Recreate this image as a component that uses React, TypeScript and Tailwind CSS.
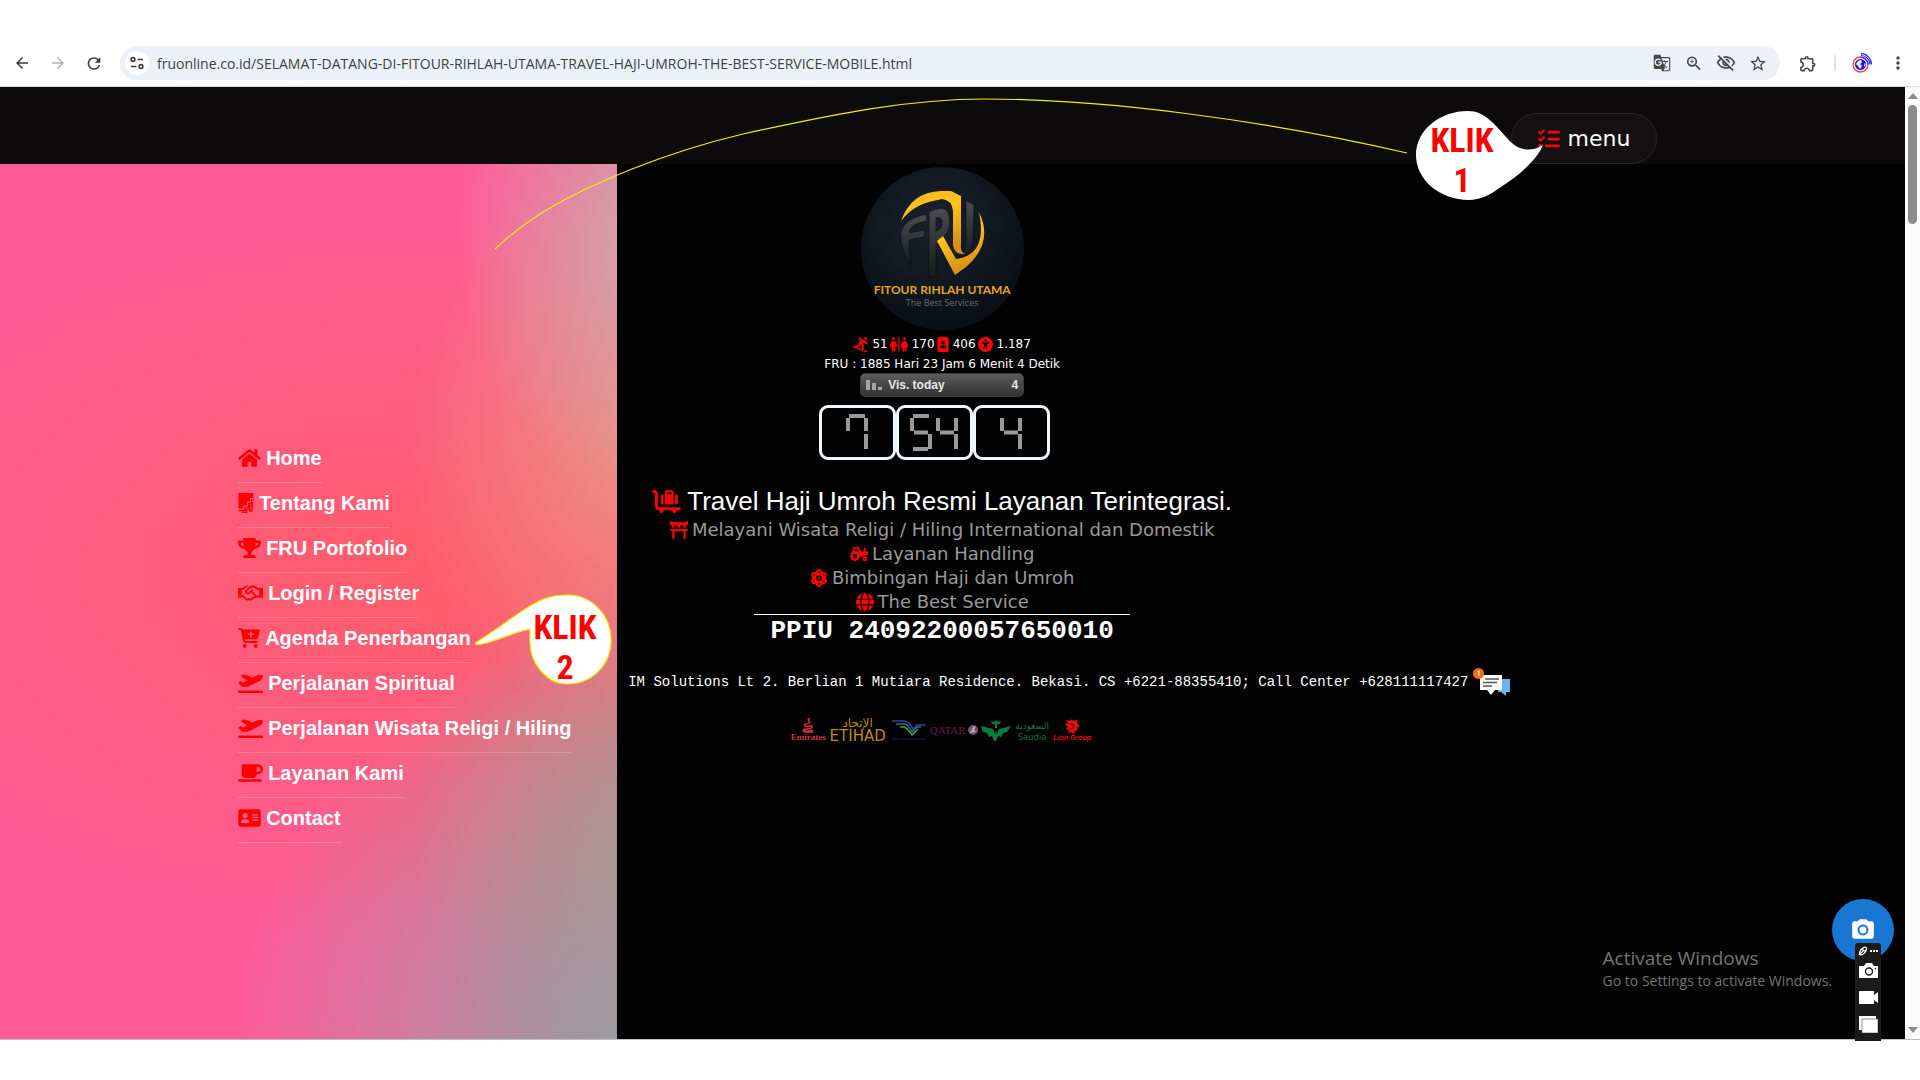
import React from "react";
import type { IconType } from "react-icons";
import { FaHome, FaTrophy, FaCoffee } from "react-icons/fa";
import {
  FaPersonSnowboarding,
  FaRestroom,
  FaImagePortrait,
  FaUniversalAccess,
  FaRegHandshake,
  FaCartPlus,
  FaPlaneDeparture,
  FaAddressCard,
  FaListCheck,
  FaCartFlatbedSuitcase,
  FaToriiGate,
  FaTractor,
  FaAtom,
  FaGlobe,
} from "react-icons/fa6";
import {
  MdArrowBack,
  MdArrowForward,
  MdRefresh,
  MdGTranslate,
  MdZoomIn,
  MdOutlineVisibilityOff,
  MdStarBorder,
  MdOutlineExtension,
  MdMoreVert,
  MdCameraAlt,
} from "react-icons/md";

function StepsIcon({ className }: { className?: string }) {
  return (
    <svg viewBox="0 0 15 20" className={className} fill="currentColor" aria-hidden="true">
      <path d="M0 0h15v5h-3.500v3.500h-3v4h-3.500v3H0z" />
      <path
        d="M15 7h-2v3.500h-3v4H6.500v3H0M15 9.800h-.7v2.700h-3v4H8v3H3M15 14.500h-1.700v3.500h-2.500"
        fill="none"
        stroke="currentColor"
        strokeWidth="1.300"
      />
    </svg>
  );
}

const MENU: { label: string; icon: IconType | typeof StepsIcon; size: string }[] = [
  { label: "Home", icon: FaHome, size: "h-5 w-[23px]" },
  { label: "Tentang Kami", icon: StepsIcon, size: "h-5 w-4" },
  { label: "FRU Portofolio", icon: FaTrophy, size: "h-5 w-[23px]" },
  { label: "Login / Register", icon: FaRegHandshake, size: "h-5 w-[25px]" },
  { label: "Agenda Penerbangan", icon: FaCartPlus, size: "h-5 w-[22px]" },
  { label: "Perjalanan Spiritual", icon: FaPlaneDeparture, size: "h-5 w-[25px]" },
  { label: "Perjalanan Wisata Religi / Hiling", icon: FaPlaneDeparture, size: "h-5 w-[25px]" },
  { label: "Layanan Kami", icon: FaCoffee, size: "h-5 w-[25px]" },
  { label: "Contact", icon: FaAddressCard, size: "h-5 w-[23px]" },
];

const STATS: { value: string; icon: IconType; size: string }[] = [
  { value: "51", icon: FaPersonSnowboarding, size: "h-[15px] w-[15px]" },
  { value: "170", icon: FaRestroom, size: "h-[15px] w-[18px]" },
  { value: "406", icon: FaImagePortrait, size: "h-[15px] w-[12px]" },
  { value: "1.187", icon: FaUniversalAccess, size: "h-[15px] w-[15px]" },
];

const SERVICES: { label: string; icon: IconType }[] = [
  { label: "Melayani Wisata Religi / Hiling International dan Domestik", icon: FaToriiGate },
  { label: "Layanan Handling", icon: FaTractor },
  { label: "Bimbingan Haji dan Umroh", icon: FaAtom },
  { label: "The Best Service", icon: FaGlobe },
];

/* Segment order: top, top-left, top-right, middle, bottom-left, bottom-right, bottom */
const SEGMENTS = [
  [3, 2, 19, 2],
  [2, 4, 2, 17],
  [20, 4, 20, 17],
  [4, 18.5, 18, 18.5],
  [2, 20, 2, 33],
  [20, 20, 20, 35],
  [3, 35, 18, 35],
];
const LIT: Record<string, number[]> = {
  "4": [1, 2, 3, 5],
  "5": [0, 1, 3, 5, 6],
  "7": [0, 1, 2, 5],
};

function Counter({ value }: { value: string }) {
  return (
    <div
      role="img"
      aria-label={value}
      className="flex h-[55px] w-[77px] items-center justify-center gap-1 rounded-[9px] border-[3px] border-[#f0f8ff]"
    >
      {value.split("").map((digit, i) => (
        <svg key={i} viewBox="0 0 22 37" className="h-[37px] w-[22px]" aria-hidden="true">
          {LIT[digit].map((s) => (
            <line
              key={s}
              x1={SEGMENTS[s][0]}
              y1={SEGMENTS[s][1]}
              x2={SEGMENTS[s][2]}
              y2={SEGMENTS[s][3]}
              stroke="#999"
              strokeWidth="4"
            />
          ))}
        </svg>
      ))}
    </div>
  );
}

function BrowserBar() {
  return (
    <header className="flex h-[87px] shrink-0 items-end border-b border-[#d9dcdc] bg-white pb-[6px] text-[#474747]">
      <div className="flex h-[34px] w-full items-center">
        <nav className="flex items-center gap-4 pl-3" aria-label="Browser">
          <button aria-label="Back" className="text-[#3c3c3c]"><MdArrowBack className="h-[18px] w-5" /></button>
          <button aria-label="Forward" className="text-[#b4b4b4]"><MdArrowForward className="h-[18px] w-5" /></button>
          <button aria-label="Reload" className="text-[#3c3c3c]"><MdRefresh className="h-[19px] w-5" /></button>
        </nav>
        <div className="ml-4 flex h-[34px] flex-1 items-center rounded-full bg-[#ebf0f9] pr-3">
          <button aria-label="Site information" className="ml-[5px] flex h-6 w-6 shrink-0 items-center justify-center rounded-full bg-white">
            <svg viewBox="0 0 14 14" className="h-[14px] w-[14px]" fill="none" stroke="#3c3c3c" strokeWidth="1.600">
              <circle cx="3" cy="3.500" r="1.900" />
              <path d="M7.500 3.500H13M1 10.500h5.500" />
              <circle cx="11" cy="10.500" r="1.900" />
            </svg>
          </button>
          <input
            aria-label="Address"
            readOnly
            value="fruonline.co.id/SELAMAT-DATANG-DI-FITOUR-RIHLAH-UTAMA-TRAVEL-HAJI-UMROH-THE-BEST-SERVICE-MOBILE.html"
            className="ml-2 min-w-0 flex-1 bg-transparent font-['Open_Sans',sans-serif] text-[14px] text-[#3f4145] outline-none"
          />
          <div className="flex items-center gap-3">
            <button aria-label="Translate"><MdGTranslate className="h-[18px] w-5" /></button>
            <button aria-label="Zoom"><MdZoomIn className="h-[19px] w-5" /></button>
            <button aria-label="Third-party cookies blocked"><MdOutlineVisibilityOff className="h-5 w-5" /></button>
            <button aria-label="Bookmark"><MdStarBorder className="h-[19px] w-5" /></button>
          </div>
        </div>
        <div className="flex items-center pr-3 pl-[18px]">
          <button aria-label="Extensions"><MdOutlineExtension className="h-[19px] w-5" /></button>
          <span className="mx-4 h-4 w-[2px] bg-[#d3e3fd]" />
          <button aria-label="Profile">
            <svg viewBox="0 0 20 20" className="h-5 w-5" fill="none">
              <circle cx="8.500" cy="11.500" r="7.500" stroke="#ee3b4b" strokeWidth="1.300" />
              <circle cx="8.500" cy="11.500" r="5.500" fill="#1a1aee" />
              <path d="M6 8l3-1 1 2-2 2 2 2-2 3-2-3-2-2zM12 10l1.500 2-1 2z" fill="#fff" />
              <path d="M9 4.500a7 7 0 0 1 7 7M9 2.500a9 9 0 0 1 9 9M9 .7a10.500 10.500 0 0 1 10.500 10.800" stroke="#2a2aff" strokeWidth="1.200" />
            </svg>
          </button>
          <button aria-label="More" className="ml-4"><MdMoreVert className="h-5 w-5" /></button>
        </div>
      </div>
    </header>
  );
}

function Logo() {
  return (
    <div className="flex h-[163px] w-[163px] flex-col items-center rounded-full bg-[radial-gradient(circle_at_45%_35%,#1a212c_0%,#10161e_50%,#05080d_100%)] pt-[20px]">
      <svg viewBox="0 0 92 92" className="h-[92px] w-[92px]" aria-hidden="true">
        <defs>
          <linearGradient id="gold" x1="0" y1="0" x2="0.300" y2="1">
            <stop offset="0" stopColor="#f5b31b" />
            <stop offset="0.400" stopColor="#ffc61c" />
            <stop offset="1" stopColor="#d98f12" />
          </linearGradient>
          <linearGradient id="steel" x1="0" y1="0" x2="0" y2="1">
            <stop offset="0" stopColor="#484b4f" />
            <stop offset="1" stopColor="#16191d" />
          </linearGradient>
        </defs>
        <g fill="url(#steel)" stroke="#07090c" strokeWidth="0.500">
          <path d="M30 27 L31 34 Q13 37 13 46 L29 43 L28 50 L13 53 Q12 65 16 79 Q3 62 5 45 Q8 32 30 27Z" />
          <path d="M33 25 Q50 16 53 28 Q56 43 47 50 L43 54 L40 59 L40 89 L33 91 Z M40 31 L40 44 Q47 42 46 34 Q45 29 40 31Z" fillRule="evenodd" />
          <path d="M70 13 L78 18 L77 54 Q76 65 68 70 L62 71 Q70 65 70 54Z" />
        </g>
        <path
          d="M5 34 Q15 5 45 4 L55 4 L65 9 L65 57 Q64 65 69 67 Q58 68 57 58 L57 24 Q56 13 46 12 L37 14 Q17 18 5 34Z"
          fill="url(#gold)"
        />
        <path d="M83 25 Q98 56 70 80 L59 88 L41 54 L47 49 L60 72 Q92 68 83 25Z" fill="url(#gold)" />
      </svg>
      <p className="mt-[3px] font-['Lato','Open_Sans',sans-serif] text-[12px] leading-[15px] font-bold whitespace-nowrap text-[#e5a41f]">
        FITOUR RIHLAH UTAMA
      </p>
      <p className="font-['Open_Sans',sans-serif] text-[9px] leading-[12px] text-[#66696d]">The Best Services</p>
    </div>
  );
}

function Airlines() {
  return (
    <div className="mt-[19px] flex h-[26px] items-end justify-center gap-[3px] leading-none whitespace-nowrap">
      <div className="flex w-8 flex-col items-center text-[#d2343a]">
        <svg viewBox="0 0 14 15" className="h-[15px] w-[14px]" fill="none" stroke="currentColor" strokeWidth="1.500" aria-hidden="true">
          <path d="M9 0C4 3 11 3 8 5S2 6 4 8s8-2 7 1-8 1-8 3 6 1 9 0M4 11c-3 1-2 3 1 3h7" />
        </svg>
        <span className="font-['Liberation_Serif',serif] text-[9px] leading-[9px] font-bold">Emirates</span>
      </div>
      <div className="flex w-[61px] flex-col items-center text-[#bd8b13]">
        <span className="font-['DejaVu_Sans',sans-serif] text-[12px] leading-[13px]">الإتحاد</span>
        <span className="font-['DejaVu_Sans',sans-serif] text-[15px] leading-[12px]">ETIHAD</span>
      </div>
      <div className="flex w-9 flex-col items-center text-[#20306e]">
        <svg viewBox="0 0 36 17" className="h-[17px] w-9" fill="none" strokeWidth="1.500" aria-hidden="true">
          <path d="M1 2h11q5 0 8 5l2 3 4-4h9" stroke="#34439a" />
          <path d="M5 5h8q4 0 6 5l2 3 5-5h4" stroke="#2d6b8f" />
          <path d="M9 8h4q3 1 5 4l3 4 6-6" stroke="#4f9b45" />
        </svg>
        <span className="text-[4px] leading-[6px]">Garuda Indonesia</span>
      </div>
      <div className="flex w-[48px] items-center justify-center gap-[1px] pb-[6px] text-[#6b1848]">
        <span className="font-['Liberation_Serif',serif] text-[11px] leading-[12px]">QATAR</span>
        <svg viewBox="0 0 12 12" className="h-3 w-3 shrink-0" aria-hidden="true">
          <circle cx="6" cy="6" r="5" fill="#74506a" />
          <path d="M3 9L6 3l3-1-2 4 2 2z" fill="#b9a5b3" />
        </svg>
      </div>
      <div className="flex w-[68px] items-center justify-center gap-1 text-[#0c7a43]">
        <svg viewBox="0 0 30 22" className="h-[22px] w-[30px] shrink-0" fill="currentColor" aria-hidden="true">
          <path d="M15 0l2 2 3-1-1 3h-8l-1-3 3 1zM14 4h2v4h-2zM0 6l12 3 2 5 1-4 1 4 2-5 12-3-4 6-4 1-2 4-3-1-2 5h-2l-2-5-3 1-2-4-4-1z" />
        </svg>
        <div className="flex flex-col items-center">
          <span className="font-['DejaVu_Sans',sans-serif] text-[9px] leading-[12px]">السعودية</span>
          <span className="font-['Open_Sans',sans-serif] text-[9px] leading-[10px]">Saudia</span>
        </div>
      </div>
      <div className="flex w-10 flex-col items-center text-[#ee0808]">
        <svg viewBox="0 0 16 15" className="h-[15px] w-4" fill="currentColor" aria-hidden="true">
          <path d="M2 1l4 1 2-2 1 2 4-1v3l3 3-3 1 1 3-3 1-1 3-3-2-3 1 1-3-3-1 2-2-3-3 3-1z" />
          <path d="M6 5l4 1-1 3-3 1" stroke="#020202" fill="none" />
        </svg>
        <span className="font-['Liberation_Sans',sans-serif] text-[7px] leading-[8px] font-bold italic">Lion Group</span>
      </div>
    </div>
  );
}

function SideMenu() {
  return (
    <aside className="w-[32.4%] shrink-0 bg-[radial-gradient(ellipse_64%_48%_at_102%_102%,#989ea0_0%,#989ea0b0_35%,#989ea000_100%),radial-gradient(ellipse_32%_30%_at_106%_8%,#ccaaac_0%,#ccaaac00_100%),radial-gradient(ellipse_40%_32%_at_105%_32%,#ea9282_0%,#ea928200_100%),radial-gradient(ellipse_38%_32%_at_105%_76%,#b89484_0%,#b8948400_100%),radial-gradient(ellipse_105%_42%_at_70%_47%,#ff5c6a_0%,#ff5c6a00_100%)] bg-[#ff5c98] pt-[274px] pl-[12.5%]">
      <ul className="font-['Liberation_Sans',Arial,sans-serif] text-[20px] leading-6 font-bold text-white">
        {MENU.map(({ label, icon: Icon, size }) => (
          <li key={label} className="flex h-[45px]">
            <a href="#" className="flex items-center gap-[5px] border-b border-white/20 pb-1 whitespace-nowrap">
              <Icon className={`${size} shrink-0 text-[#ff0000]`} />
              {label}
            </a>
          </li>
        ))}
      </ul>
    </aside>
  );
}

function Hero() {
  return (
    <main className="min-w-0 flex-1 bg-[#020202] pl-1">
      <div className="flex w-1/2 flex-col items-center pt-[3px] font-['DejaVu_Sans',Verdana,sans-serif] whitespace-nowrap text-white">
        <Logo />
        <div className="mt-1 flex h-5 items-center gap-[2px] text-[12px]">
          {STATS.map(({ value, icon: Icon, size }) => (
            <span key={value} className="flex items-center gap-1">
              <Icon className={`${size} text-[#ff0000]`} />
              {value}
            </span>
          ))}
        </div>
        <p className="pt-px text-[12px] leading-[18px]">FRU : 1885 Hari 23 Jam 6 Menit 4 Detik</p>
        <div className="flex h-6 w-[164px] items-center rounded-[5px] border border-[#3c3c3c] bg-linear-to-b from-[#5c5c5c] to-[#333] px-[5px] font-['Liberation_Sans',sans-serif] text-[12px] font-bold text-[#e8e8e8]">
          <svg viewBox="0 0 16 10" className="h-[10px] w-4" fill="#a5a5a5" aria-hidden="true">
            <path d="M0 0h4v10H0zM6 3h4v7H6zM12 7h4v3h-4z" />
          </svg>
          <span className="ml-[6px]">Vis. today</span>
          <span className="ml-auto">4</span>
        </div>
        <div className="mt-2 mr-4 flex">
          <Counter value="7" />
          <Counter value="54" />
          <Counter value="4" />
        </div>
        <h1 className="mt-[25px] flex h-8 items-center gap-[6px] font-['Liberation_Sans',Arial,sans-serif] text-[26px]">
          <FaCartFlatbedSuitcase className="h-[23px] w-[29px] text-[#ff0000]" />
          Travel Haji Umroh Resmi Layanan Terintegrasi.
        </h1>
        <ul className="mt-px flex flex-col items-center text-[18px] leading-6 text-[#999]">
          {SERVICES.map(({ label, icon: Icon }) => (
            <li key={label} className="flex items-center gap-1">
              <Icon className="h-[18px] text-[#ff0000]" />
              {label}
            </li>
          ))}
        </ul>
        <p className="w-[376px] border-t border-white pt-[2px] text-center font-['Liberation_Mono','Courier_New',monospace] text-[26px] leading-7 font-bold">
          PPIU 24092200057650010
        </p>
      </div>
      <div className="mt-[22px] flex h-[30px] items-center gap-[5px] pl-[7px] font-['Liberation_Mono','Courier_New',monospace] text-[14px] whitespace-nowrap text-white">
        <span>IM Solutions Lt 2. Berlian 1 Mutiara Residence. Bekasi. CS +6221-88355410; Call Center +628111117427</span>
        <a href="#" aria-label="Chat" className="shrink-0">
          <svg viewBox="0 0 38 28" className="h-7 w-[38px]" aria-hidden="true">
            <path d="M29 11h8v13h-4v4l-5-4h-3v-2h4z" fill="#6cb4ee" />
            <path d="M7 7h22v15h-7l-4 5-4-5H7z" fill="#fff" />
            <path d="M12 11h14M10 14.500h14M10 18h9" stroke="#555" strokeWidth="1.300" />
            <circle cx="5.500" cy="5.500" r="5.500" fill="#ff6a0a" />
            <path d="M4.500 4L6 3v5" stroke="#fff" strokeWidth="1.200" fill="none" />
          </svg>
        </a>
      </div>
      <div className="w-1/2">
        <Airlines />
      </div>
    </main>
  );
}

function Scrollbar() {
  return (
    <div className="flex w-[15px] shrink-0 flex-col items-center bg-[#fbfbfb] py-[6px]" aria-hidden="true">
      <svg viewBox="0 0 10 6" className="h-[6px] w-[10px]" fill="#8b8b8b"><path d="M0 6l5-6 5 6z" /></svg>
      <span className="mt-[6px] h-[119px] w-[9px] rounded-full bg-[#8b8b8b]" />
      <svg viewBox="0 0 10 6" className="mt-auto h-[6px] w-[10px]" fill="#8b8b8b"><path d="M0 0l5 6 5-6z" /></svg>
    </div>
  );
}

function Annotations() {
  return (
    <div className="pointer-events-none absolute top-0 left-0 font-['Roboto_Condensed','Open_Sans_Condensed',sans-serif] text-[34px] leading-[40px] font-bold text-[#ff0000]">
      <svg viewBox="0 0 1920 1080" className="h-[1080px] w-[1920px] max-w-none" aria-hidden="true">
        <path
          d="M495 249C532 214 575 192 632 169C670 154 705 143 743 134C839 113 910 99 985 99C1100 99 1260 119 1407 153"
          fill="none"
          stroke="#f5f000"
          strokeWidth="1.200"
        />
        <path
          d="M1416 155C1416 130 1440 111 1468 111C1485 111 1494 124 1508 139C1517 150 1530 153 1543 145C1536 162 1515 178 1501 187C1490 195 1480 200 1469 200C1440 200 1416 180 1416 155Z"
          fill="#fff"
        />
        <path
          d="M475 643C495 631 515 615 530 606C545 597 555 595 567 595C592 595 611 615 611 640C611 665 592 684 567 684C548 684 530 665 530 641L530 630C527 627 500 640 482 644C477 645 475 645 475 643Z"
          fill="#fff"
          stroke="#f5f000"
          strokeWidth="1.200"
        />
      </svg>
      <p className="absolute top-[120px] left-[1422px] w-20 text-center whitespace-nowrap">KLIK<br />1</p>
      <p className="absolute top-[607px] left-[525px] w-20 text-center whitespace-nowrap">KLIK<br />2</p>
    </div>
  );
}

function CaptureTools() {
  return (
    <>
      <button aria-label="Take screenshot" className="absolute right-[26px] bottom-[119px] flex h-[62px] w-[62px] items-center justify-center rounded-full bg-[#1976d2] text-white">
        <MdCameraAlt className="h-[26px] w-[26px]" />
      </button>
      <div className="absolute right-[39px] bottom-[39px] flex h-[98px] w-[26px] flex-col items-center rounded-t-[3px] bg-[#1b1b1b] text-white">
        <svg viewBox="0 0 20 10" className="mt-[3px] h-[10px] w-5" fill="none" stroke="currentColor" aria-hidden="true">
          <ellipse cx="5" cy="5" rx="4.500" ry="2.300" transform="rotate(-50 5 5)" strokeWidth="1.300" />
          <path d="M1 9l4-4 3-.5M5 5V2.500" strokeWidth="1.200" />
          <path d="M12 5h2M15 5h2M18 5h2" strokeWidth="2" />
        </svg>
        <button aria-label="Capture image" className="mt-[7px]">
          <svg viewBox="0 0 19 15" className="h-[15px] w-[19px]">
            <path d="M0 3h5l2-3h6l2 3h4v12H0z" fill="#fff" />
            <circle cx="10" cy="8.500" r="3.500" fill="#fff" stroke="#1b1b1b" strokeWidth="1.400" />
            <circle cx="16.500" cy="5.500" r=".8" fill="#1b1b1b" />
          </svg>
        </button>
        <button aria-label="Record video" className="mt-[13px]">
          <svg viewBox="0 0 19 13" className="h-[13px] w-[19px]" fill="#fff"><path d="M0 0h15v4l4-3v11l-4-3v4H0z" /></svg>
        </button>
        <button aria-label="Capture window" className="mt-3">
          <svg viewBox="0 0 19 17" className="h-[17px] w-[19px]"><path d="M0 0h17v14H0z" fill="#fff" /><path d="M3 3h16v14H3z" fill="#fff" stroke="#777" strokeWidth=".8" /></svg>
        </button>
      </div>
    </>
  );
}

export default function App() {
  return (
    <div className="relative flex min-h-screen flex-col overflow-hidden bg-white pb-10">
      <BrowserBar />
      <div className="flex flex-1 border-b border-[#bfbfbf]">
        <div className="flex min-w-0 flex-1 flex-col">
          <div className="flex h-[77px] shrink-0 items-end justify-end bg-[#0c0a0b]">
            <button className="mr-[13%] flex h-[51px] items-center gap-2 rounded-full border border-[#2b2727] bg-[#151112] px-[26px] font-['DejaVu_Sans',Verdana,sans-serif] text-[22px] text-white">
              <FaListCheck className="h-[22px] w-[22px] text-[#ff0000]" />
              menu
            </button>
          </div>
          <div className="flex flex-1">
            <SideMenu />
            <Hero />
          </div>
        </div>
        <Scrollbar />
      </div>
      <div className="absolute right-[88px] bottom-[89px] font-['Open_Sans','Noto_Sans',sans-serif] text-[#757575]">
        <p className="text-[19px] leading-[25px]">Activate Windows</p>
        <p className="text-[14px] leading-[20px]">Go to Settings to activate Windows.</p>
      </div>
      <Annotations />
      <CaptureTools />
    </div>
  );
}
